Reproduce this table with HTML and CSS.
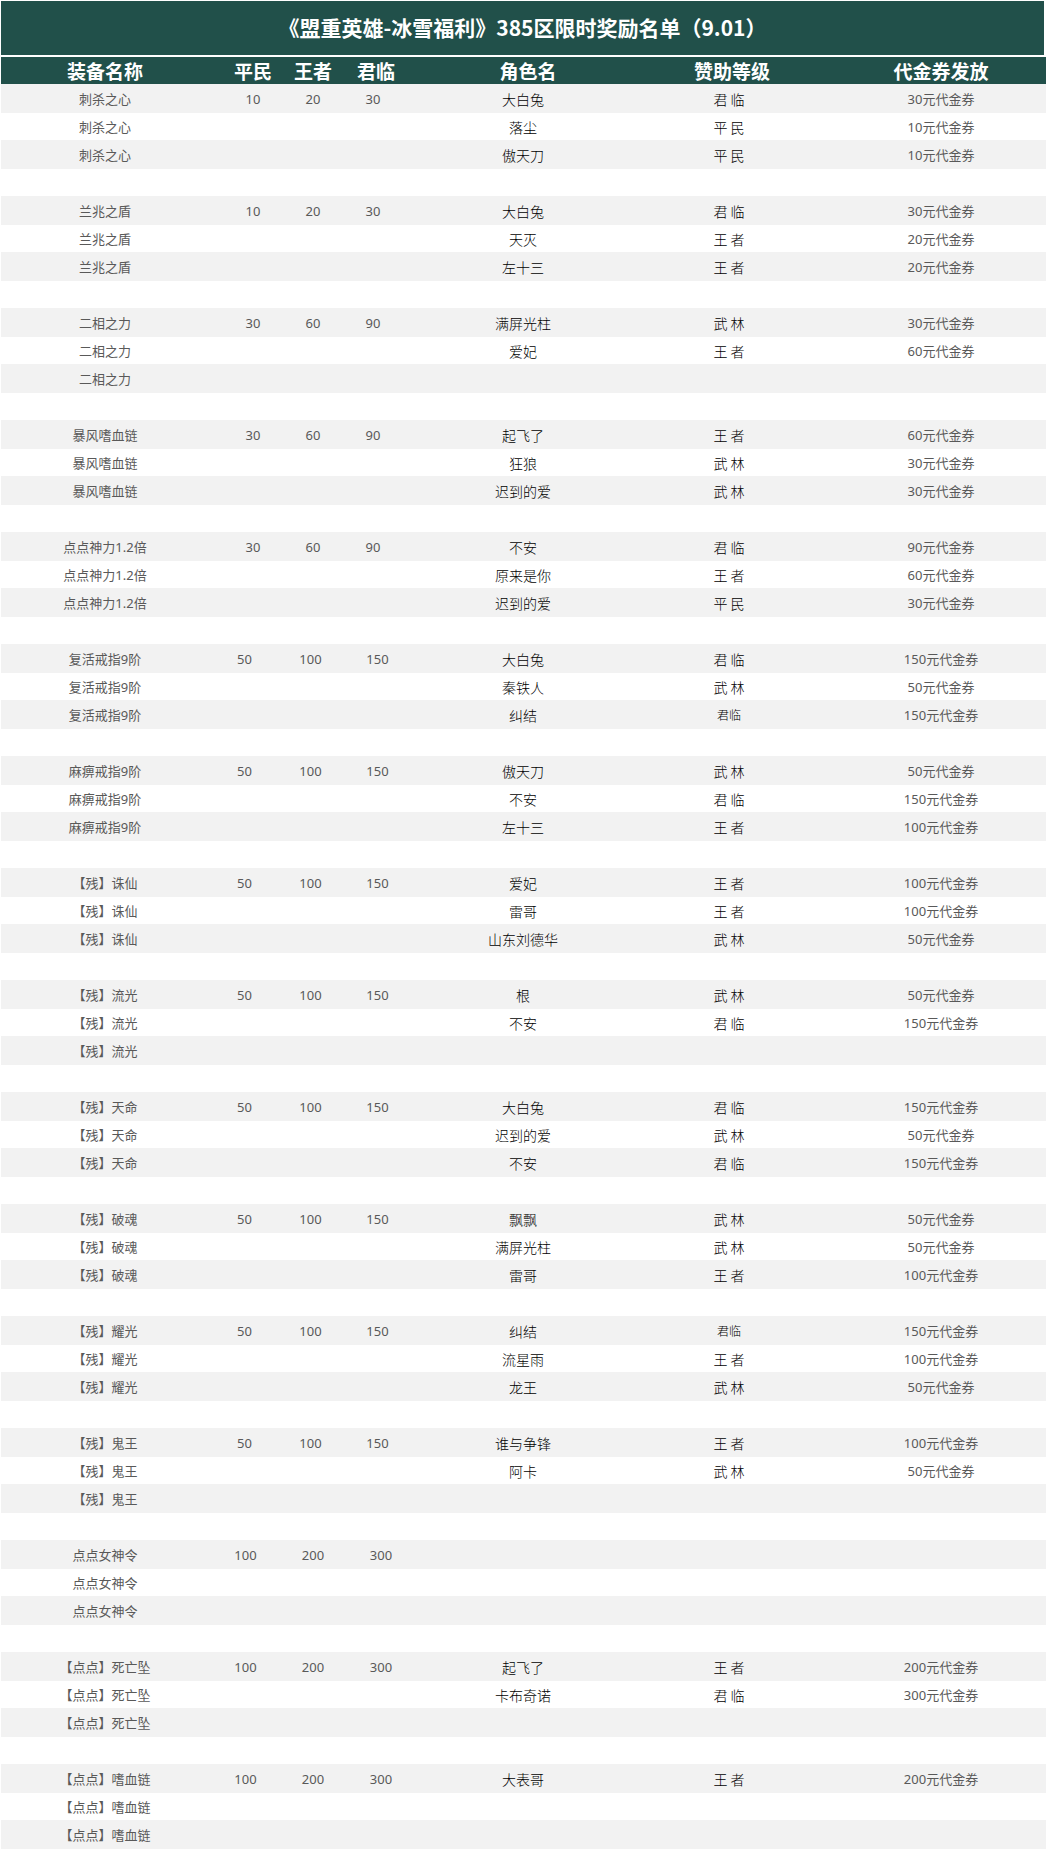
FILE: index.html
```html
<!DOCTYPE html>
<html lang="zh-CN">
<head>
<meta charset="utf-8">
<title>385区限时奖励名单</title>
<link rel="stylesheet" href="styles.css">
</head>
<body>
<div class="sheet">
  <div class="title">《盟重英雄-冰雪福利》385区限时奖励名单（9.01）</div>
  <div class="row head">
    <span class="c1">装备名称</span><span class="c2">平民</span><span class="c3">王者</span><span class="c4 h4">君临</span><span class="c5 h5">角色名</span><span class="c6 h6">赞助等级</span><span class="c7">代金券发放</span>
  </div>
  <div class="body">
    <div class="row"><span class="c1">刺杀之心</span><span class="c2">10</span><span class="c3">20</span><span class="c4">30</span><span class="c5">大白兔</span><span class="c6">君临</span><span class="c7">30元代金券</span></div>
    <div class="row"><span class="c1">刺杀之心</span><span class="c2"></span><span class="c3"></span><span class="c4"></span><span class="c5">落尘</span><span class="c6">平民</span><span class="c7">10元代金券</span></div>
    <div class="row"><span class="c1">刺杀之心</span><span class="c2"></span><span class="c3"></span><span class="c4"></span><span class="c5">傲天刀</span><span class="c6">平民</span><span class="c7">10元代金券</span></div>
    <div class="row"></div>

    <div class="row"><span class="c1">兰兆之盾</span><span class="c2">10</span><span class="c3">20</span><span class="c4">30</span><span class="c5">大白兔</span><span class="c6">君临</span><span class="c7">30元代金券</span></div>
    <div class="row"><span class="c1">兰兆之盾</span><span class="c2"></span><span class="c3"></span><span class="c4"></span><span class="c5">天灭</span><span class="c6">王者</span><span class="c7">20元代金券</span></div>
    <div class="row"><span class="c1">兰兆之盾</span><span class="c2"></span><span class="c3"></span><span class="c4"></span><span class="c5">左十三</span><span class="c6">王者</span><span class="c7">20元代金券</span></div>
    <div class="row"></div>

    <div class="row"><span class="c1">二相之力</span><span class="c2">30</span><span class="c3">60</span><span class="c4">90</span><span class="c5">满屏光柱</span><span class="c6">武林</span><span class="c7">30元代金券</span></div>
    <div class="row"><span class="c1">二相之力</span><span class="c2"></span><span class="c3"></span><span class="c4"></span><span class="c5">爱妃</span><span class="c6">王者</span><span class="c7">60元代金券</span></div>
    <div class="row"><span class="c1">二相之力</span></div>
    <div class="row"></div>

    <div class="row"><span class="c1">暴风嗜血链</span><span class="c2">30</span><span class="c3">60</span><span class="c4">90</span><span class="c5">起飞了</span><span class="c6">王者</span><span class="c7">60元代金券</span></div>
    <div class="row"><span class="c1">暴风嗜血链</span><span class="c2"></span><span class="c3"></span><span class="c4"></span><span class="c5">狂狼</span><span class="c6">武林</span><span class="c7">30元代金券</span></div>
    <div class="row"><span class="c1">暴风嗜血链</span><span class="c2"></span><span class="c3"></span><span class="c4"></span><span class="c5">迟到的爱</span><span class="c6">武林</span><span class="c7">30元代金券</span></div>
    <div class="row"></div>

    <div class="row"><span class="c1">点点神力1.2倍</span><span class="c2">30</span><span class="c3">60</span><span class="c4">90</span><span class="c5">不安</span><span class="c6">君临</span><span class="c7">90元代金券</span></div>
    <div class="row"><span class="c1">点点神力1.2倍</span><span class="c2"></span><span class="c3"></span><span class="c4"></span><span class="c5">原来是你</span><span class="c6">王者</span><span class="c7">60元代金券</span></div>
    <div class="row"><span class="c1">点点神力1.2倍</span><span class="c2"></span><span class="c3"></span><span class="c4"></span><span class="c5">迟到的爱</span><span class="c6">平民</span><span class="c7">30元代金券</span></div>
    <div class="row"></div>

    <div class="row"><span class="c1">复活戒指9阶</span><span class="c2 m2">50</span><span class="c3 m3">100</span><span class="c4 m4">150</span><span class="c5">大白兔</span><span class="c6">君临</span><span class="c7">150元代金券</span></div>
    <div class="row"><span class="c1">复活戒指9阶</span><span class="c2"></span><span class="c3"></span><span class="c4"></span><span class="c5">秦铁人</span><span class="c6">武林</span><span class="c7">50元代金券</span></div>
    <div class="row"><span class="c1">复活戒指9阶</span><span class="c2"></span><span class="c3"></span><span class="c4"></span><span class="c5">纠结</span><span class="c6 lv-small">君临</span><span class="c7">150元代金券</span></div>
    <div class="row"></div>

    <div class="row"><span class="c1">麻痹戒指9阶</span><span class="c2 m2">50</span><span class="c3 m3">100</span><span class="c4 m4">150</span><span class="c5">傲天刀</span><span class="c6">武林</span><span class="c7">50元代金券</span></div>
    <div class="row"><span class="c1">麻痹戒指9阶</span><span class="c2"></span><span class="c3"></span><span class="c4"></span><span class="c5">不安</span><span class="c6">君临</span><span class="c7">150元代金券</span></div>
    <div class="row"><span class="c1">麻痹戒指9阶</span><span class="c2"></span><span class="c3"></span><span class="c4"></span><span class="c5">左十三</span><span class="c6">王者</span><span class="c7">100元代金券</span></div>
    <div class="row"></div>

    <div class="row"><span class="c1">【残】诛仙</span><span class="c2 m2">50</span><span class="c3 m3">100</span><span class="c4 m4">150</span><span class="c5">爱妃</span><span class="c6">王者</span><span class="c7">100元代金券</span></div>
    <div class="row"><span class="c1">【残】诛仙</span><span class="c2"></span><span class="c3"></span><span class="c4"></span><span class="c5">雷哥</span><span class="c6">王者</span><span class="c7">100元代金券</span></div>
    <div class="row"><span class="c1">【残】诛仙</span><span class="c2"></span><span class="c3"></span><span class="c4"></span><span class="c5">山东刘德华</span><span class="c6">武林</span><span class="c7">50元代金券</span></div>
    <div class="row"></div>

    <div class="row"><span class="c1">【残】流光</span><span class="c2 m2">50</span><span class="c3 m3">100</span><span class="c4 m4">150</span><span class="c5">根</span><span class="c6">武林</span><span class="c7">50元代金券</span></div>
    <div class="row"><span class="c1">【残】流光</span><span class="c2"></span><span class="c3"></span><span class="c4"></span><span class="c5">不安</span><span class="c6">君临</span><span class="c7">150元代金券</span></div>
    <div class="row"><span class="c1">【残】流光</span></div>
    <div class="row"></div>

    <div class="row"><span class="c1">【残】天命</span><span class="c2 m2">50</span><span class="c3 m3">100</span><span class="c4 m4">150</span><span class="c5">大白兔</span><span class="c6">君临</span><span class="c7">150元代金券</span></div>
    <div class="row"><span class="c1">【残】天命</span><span class="c2"></span><span class="c3"></span><span class="c4"></span><span class="c5">迟到的爱</span><span class="c6">武林</span><span class="c7">50元代金券</span></div>
    <div class="row"><span class="c1">【残】天命</span><span class="c2"></span><span class="c3"></span><span class="c4"></span><span class="c5">不安</span><span class="c6">君临</span><span class="c7">150元代金券</span></div>
    <div class="row"></div>

    <div class="row"><span class="c1">【残】破魂</span><span class="c2 m2">50</span><span class="c3 m3">100</span><span class="c4 m4">150</span><span class="c5">飘飘</span><span class="c6">武林</span><span class="c7">50元代金券</span></div>
    <div class="row"><span class="c1">【残】破魂</span><span class="c2"></span><span class="c3"></span><span class="c4"></span><span class="c5">满屏光柱</span><span class="c6">武林</span><span class="c7">50元代金券</span></div>
    <div class="row"><span class="c1">【残】破魂</span><span class="c2"></span><span class="c3"></span><span class="c4"></span><span class="c5">雷哥</span><span class="c6">王者</span><span class="c7">100元代金券</span></div>
    <div class="row"></div>

    <div class="row"><span class="c1">【残】耀光</span><span class="c2 m2">50</span><span class="c3 m3">100</span><span class="c4 m4">150</span><span class="c5">纠结</span><span class="c6 lv-small">君临</span><span class="c7">150元代金券</span></div>
    <div class="row"><span class="c1">【残】耀光</span><span class="c2"></span><span class="c3"></span><span class="c4"></span><span class="c5">流星雨</span><span class="c6">王者</span><span class="c7">100元代金券</span></div>
    <div class="row"><span class="c1">【残】耀光</span><span class="c2"></span><span class="c3"></span><span class="c4"></span><span class="c5">龙王</span><span class="c6">武林</span><span class="c7">50元代金券</span></div>
    <div class="row"></div>

    <div class="row"><span class="c1">【残】鬼王</span><span class="c2 m2">50</span><span class="c3 m3">100</span><span class="c4 m4">150</span><span class="c5">谁与争锋</span><span class="c6">王者</span><span class="c7">100元代金券</span></div>
    <div class="row"><span class="c1">【残】鬼王</span><span class="c2"></span><span class="c3"></span><span class="c4"></span><span class="c5">阿卡</span><span class="c6">武林</span><span class="c7">50元代金券</span></div>
    <div class="row"><span class="c1">【残】鬼王</span></div>
    <div class="row"></div>

    <div class="row"><span class="c1">点点女神令</span><span class="c2 k2">100</span><span class="c3">200</span><span class="c4 k4">300</span></div>
    <div class="row"><span class="c1">点点女神令</span></div>
    <div class="row"><span class="c1">点点女神令</span></div>
    <div class="row"></div>

    <div class="row"><span class="c1">【点点】死亡坠</span><span class="c2 k2">100</span><span class="c3">200</span><span class="c4 k4">300</span><span class="c5">起飞了</span><span class="c6">王者</span><span class="c7">200元代金券</span></div>
    <div class="row"><span class="c1">【点点】死亡坠</span><span class="c2"></span><span class="c3"></span><span class="c4"></span><span class="c5">卡布奇诺</span><span class="c6">君临</span><span class="c7">300元代金券</span></div>
    <div class="row"><span class="c1">【点点】死亡坠</span></div>
    <div class="row"></div>

    <div class="row"><span class="c1">【点点】嗜血链</span><span class="c2 k2">100</span><span class="c3">200</span><span class="c4 k4">300</span><span class="c5">大表哥</span><span class="c6">王者</span><span class="c7">200元代金券</span></div>
    <div class="row"><span class="c1">【点点】嗜血链</span></div>
    <div class="row"><span class="c1">【点点】嗜血链</span></div>
  </div>
</div>
</body>
</html>
```

FILE: styles.css
```css
html, body {
  margin: 0;
  padding: 0;
  background: #ffffff;
}

body {
  font-family: "Noto Sans", "Noto Sans CJK SC", sans-serif;
  color: #595959;
}

.sheet {
  padding: 1px 0 0 1px;
  width: 1045px;
}

.title {
  width: 1043px;
  height: 54px;
  background: #21504a;
  color: #ffffff;
  font-family: "Noto Sans CJK SC", sans-serif;
  font-weight: 700;
  font-size: 21px;
  display: flex;
  align-items: center;
  justify-content: center;
  margin-bottom: 2px;
  padding-bottom: 2px;
  box-sizing: border-box;
}

.row {
  display: grid;
  grid-template-columns: 222px 60px 60px 60px 240px 172px 231px;
  align-items: center;
  height: 27px;
  font-size: 13px;
  line-height: 16px;
}

.row > span {
  text-align: center;
  white-space: nowrap;
}

.head {
  background: #21504a;
  color: #ffffff;
  font-family: "Noto Sans CJK SC", sans-serif;
  font-weight: 700;
  font-size: 19px;
  line-height: 22px;
  height: 27px;
}

.body .row:nth-child(odd) {
  background: #f2f2f2;
  height: 29px;
}

.c1 {
  padding-right: 14px;
}

.c7 {
  padding-left: 21px;
}

.c5,
.c6 {
  font-family: "Noto Sans CJK SC", sans-serif;
  font-size: 14px;
  font-weight: 300;
  color: #000000;
}

.body .c6 {
  letter-spacing: 3px;
  padding-left: 3px;
}

.body .c6.lv-small {
  font-size: 12px;
  letter-spacing: 0;
  padding-left: 0;
}

.head .c5,
.head .c6 {
  font-size: 19px;
  font-weight: 700;
  color: #ffffff;
}

.head .h4 {
  padding-left: 6px;
}

.head .h5 {
  padding-left: 10px;
}

.head .h6 {
  padding-left: 6px;
}

/* 50 / 100 / 150 rows */
.m2 {
  padding-right: 17px;
}

.m3 {
  padding-right: 5px;
}

.m4 {
  padding-left: 9px;
}

/* 100 / 200 / 300 rows */
.k2 {
  padding-right: 15px;
}

.k4 {
  padding-left: 16px;
}
```
